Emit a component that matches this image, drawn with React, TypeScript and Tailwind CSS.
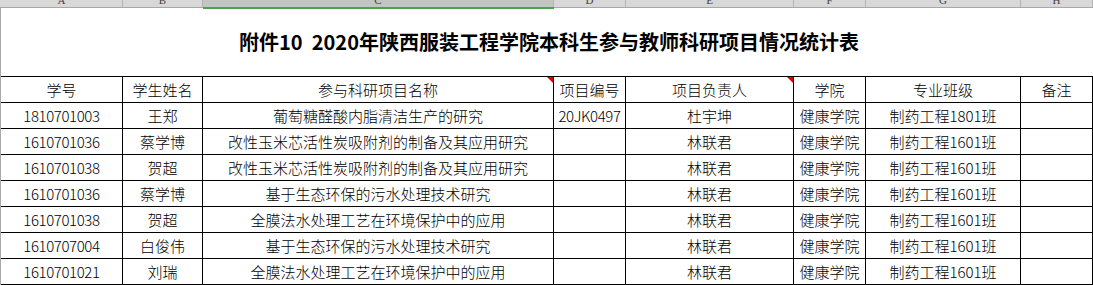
import React from "react";

const letters = ["A", "B", "C", "D", "E", "F", "G", "H"];
const widths = ["w-[122px]", "w-[80px]", "w-[351px]", "w-[72px]", "w-[168px]", "w-[72px]", "w-[155px]", "w-[72px]"];

const headers = ["学号", "学生姓名", "参与科研项目名称", "项目编号", "项目负责人", "学院", "专业班级", "备注"];

const rows: string[][] = [
  ["1810701003", "王郑", "葡萄糖醛酸内脂清洁生产的研究", "20JK0497", "杜宇坤", "健康学院", "制药工程1801班", ""],
  ["1610701036", "蔡学博", "改性玉米芯活性炭吸附剂的制备及其应用研究", "", "林联君", "健康学院", "制药工程1601班", ""],
  ["1610701038", "贺超", "改性玉米芯活性炭吸附剂的制备及其应用研究", "", "林联君", "健康学院", "制药工程1601班", ""],
  ["1610701036", "蔡学博", "基于生态环保的污水处理技术研究", "", "林联君", "健康学院", "制药工程1601班", ""],
  ["1610701038", "贺超", "全膜法水处理工艺在环境保护中的应用", "", "林联君", "健康学院", "制药工程1601班", ""],
  ["1610707004", "白俊伟", "基于生态环保的污水处理技术研究", "", "林联君", "健康学院", "制药工程1601班", ""],
  ["1610701021", "刘瑞", "全膜法水处理工艺在环境保护中的应用", "", "林联君", "健康学院", "制药工程1601班", ""],
];

function Triangle() {
  return (
    <svg className="absolute right-0 top-0" width="6" height="6" viewBox="0 0 6 6">
      <polygon points="0,0 6,0 6,6" fill="#e00000" />
    </svg>
  );
}

export default function App() {
  return (
    <div className="w-[1093px] h-[285px] bg-white overflow-hidden font-[Noto_Sans_CJK_SC,sans-serif] text-black">
      {/* column letter strip */}
      <div className="flex h-[8px] bg-[#d8d8d8] border-b border-[#a8a8a8] overflow-visible relative">
        <div className="w-[1px] shrink-0" />
        {letters.map((l, i) => (
          <div
            key={l}
            className={`${widths[i]} shrink-0 relative h-[7px] overflow-hidden border-r border-[#b4b4b4] ${i === 2 ? "bg-[#c4c4c4]" : ""}`}
          >
            <div className="absolute left-0 right-0 top-[-5px] text-center text-[11px] leading-[11px] text-[#404040] font-[Liberation_Serif,serif]">
              {l}
            </div>
          </div>
        ))}
        <div className="absolute left-[203px] w-[351px] bottom-[-2px] h-[2px] bg-[#4aa54a]" />
      </div>

      <div className="border-l border-[#a8a8a8]">
        {/* title row */}
        <div className="h-[69px] border-b border-black flex items-center justify-center">
          <div className="text-[20px] font-bold leading-none pl-[4px] whitespace-pre">
            附件10  2020年陕西服装工程学院本科生参与教师科研项目情况统计表
          </div>
        </div>

        {/* header row */}
        <div className="flex h-[26px] font-light">
          {headers.map((h, i) => (
            <div
              key={h}
              className={`${widths[i]} shrink-0 relative border-r border-b border-black flex items-center justify-center text-[15px] leading-none`}
            >
              {h}
              {(i === 2 || i === 4) && <Triangle />}
            </div>
          ))}
        </div>

        {rows.map((r, ri) => (
          <div key={ri} className="flex h-[26px] font-light">
            {r.map((c, i) => (
              <div
                key={i}
                className={`${widths[i]} shrink-0 border-r border-b border-black flex items-center justify-center text-[15px] leading-none ${i === 0 || i === 3 ? "tracking-[-0.4px]" : ""}`}
              >
                {c}
              </div>
            ))}
          </div>
        ))}
      </div>
    </div>
  );
}
